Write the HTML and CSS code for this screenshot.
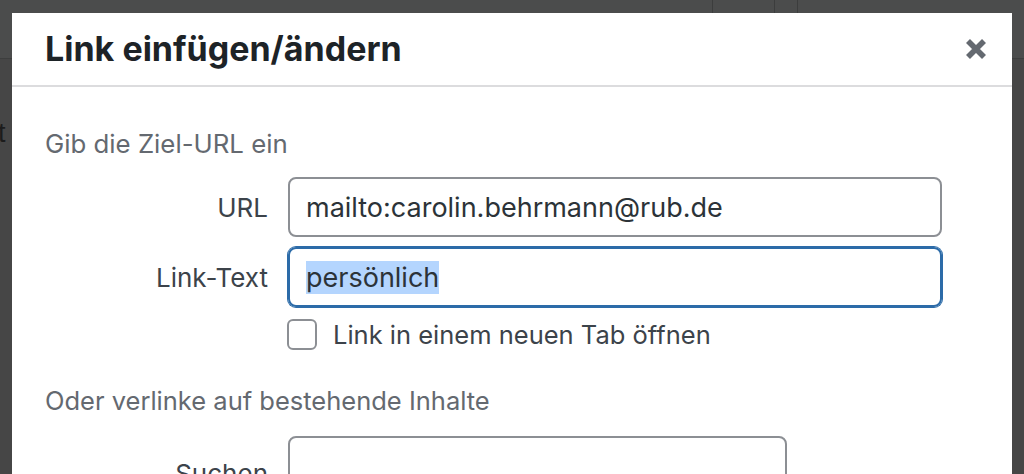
FILE: index.html
```html
<!DOCTYPE html>
<html lang="de">
<head>
<meta charset="utf-8">
<title>Link einfügen/ändern</title>
<link rel="stylesheet" href="styles.css">
</head>
<body>
<div class="page">
  <div class="toolbar">
    <span class="tb-fill"></span>
    <span class="tb-sep tb-sep-a"></span>
    <span class="tb-sep tb-sep-b"></span>
    <span class="tb-sep tb-sep-c"></span>
  </div>
  <div class="page-content">
    <span class="page-text">t</span>
  </div>
</div>

<div class="modal" role="dialog" aria-labelledby="link-title">
  <div class="modal-header">
    <h1 id="link-title" class="modal-title">Link einfügen/ändern</h1>
    <button class="modal-close" type="button" aria-label="Schließen">
      <svg viewBox="0 0 24 24" width="24" height="24" aria-hidden="true">
        <path d="M4 4 L20 20 M20 4 L4 20" stroke="#646970" stroke-width="5.6" stroke-linecap="butt" fill="none"/>
      </svg>
    </button>
  </div>
  <div class="modal-body">
    <p class="howto">Gib die Ziel-URL ein</p>
    <div class="field-row">
      <label class="field-label" for="url">URL</label>
      <div class="input" id="url">mailto:carolin.behrmann@rub.de</div>
    </div>
    <div class="field-row">
      <label class="field-label" for="text">Link-Text</label>
      <div class="input input-focus" id="text"><span class="selected">persönlich</span></div>
    </div>
    <div class="check-row">
      <span class="checkbox"></span>
      <span class="check-label">Link in einem neuen Tab öffnen</span>
    </div>
    <p class="howto howto-second">Oder verlinke auf bestehende Inhalte</p>
    <div class="field-row search-row">
      <label class="field-label search-label" for="search">Suchen</label>
      <div class="input input-search" id="search"></div>
    </div>
  </div>
</div>
</body>
</html>
```

FILE: styles.css
```css
* { box-sizing: border-box; }

html, body {
  margin: 0;
  padding: 0;
  height: 100%;
  overflow: hidden;
}

body {
  background: #464646;
  font-family: Inter, "Noto Sans", sans-serif;
}

.page {
  display: flex;
  flex-direction: column;
  height: 100%;
}

.toolbar {
  height: 59px;
  background: #4b4c4c;
  border-bottom: 1px solid #3d3e3e;
  display: flex;
}

.tb-fill { width: 712px; }
.tb-sep {
  width: 1px;
  background: #3c3d3d;
}
.tb-sep-a { margin-right: 61px; }
.tb-sep-b { margin-right: 22px; }

.page-content {
  flex: 1;
  background: #464646;
  padding-top: 54px;
}

.page-text {
  display: block;
  font-family: "Liberation Sans", sans-serif;
  font-size: 27px;
  color: #1c1c1c;
  line-height: 40px;
  margin-left: -2px;
}

.modal {
  position: absolute;
  left: 12px;
  top: 13px;
  width: 1000px;
  height: 520px;
  background: #fff;
}

.modal-header {
  height: 74px;
  border-bottom: 2px solid #dcdcde;
  display: flex;
  align-items: center;
  position: relative;
}

.modal-title {
  margin: 0;
  padding-left: 33px;
  font-size: 34px;
  font-weight: 700;
  color: #1d2327;
  letter-spacing: 0;
  line-height: 72px;
}

.modal-close {
  position: absolute;
  right: 0;
  top: 0;
  width: 72px;
  height: 72px;
  border: 0;
  background: transparent;
  padding: 0;
  display: flex;
  align-items: center;
  justify-content: center;
}

.modal-close svg {
  display: block;
}

.modal-body {
  padding: 0 0 0 33px;
}

.howto {
  margin: 0;
  color: #646970;
  font-size: 25.8px;
  line-height: 34px;
  padding-top: 40px;
}

.howto-second {
  font-size: 25.5px;
  padding-top: 34px;
}

.field-row {
  display: flex;
  align-items: center;
  margin-top: 10px;
}

.howto + .field-row { margin-top: 16px; }

.field-label {
  width: 223px;
  margin-right: 20px;
  text-align: right;
  font-size: 26px;
  color: #3c434a;
}

.input {
  width: 654px;
  height: 60px;
  border: 2px solid #8c8f94;
  border-radius: 8px;
  padding: 0 16px;
  font-size: 27px;
  color: #2c3338;
  display: flex;
  align-items: center;
}

.input-focus {
  border-color: #2c6ba8;
  box-shadow: 0 0 0 1px #2c6ba8;
}

.selected {
  background: #b4d5fe;
}

.check-row {
  display: flex;
  align-items: center;
  margin-top: 12px;
  padding-left: 242px;
}

.checkbox {
  width: 30px;
  height: 31px;
  border: 2px solid #8c8f94;
  border-radius: 6px;
  margin-right: 16px;
}

.check-label {
  font-size: 25.5px;
  color: #3c434a;
}

.search-row {
  align-items: flex-start;
}

.howto + .search-row { margin-top: 18px; }

.input-search {
  width: 499px;
  height: 60px;
}

.search-label {
  padding-top: 22px;
}
```
